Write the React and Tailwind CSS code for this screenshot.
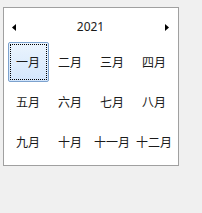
import React from 'react';

const months = ['一月', '二月', '三月', '四月', '五月', '六月', '七月', '八月', '九月', '十月', '十一月', '十二月'];

const App = () => {
  return (
    <div className="w-[202px] h-[213px] bg-[#f0f0f0] pt-[7px] pl-[3px]" style={{ fontFamily: '"Noto Sans", "Noto Sans CJK SC", sans-serif' }}>
      <div className="w-[176px] h-[159px] bg-white border border-[#a0a0a0] px-[3px]">
        <div className="h-[20px] mt-[9px] flex items-center justify-between pl-[5px] pr-[6px]">
          <svg width="4" height="7" viewBox="0 0 4 7"><path d="M4 0 L0 3.5 L4 7 Z" fill="#000" /></svg>
          <span className="text-[12px] text-[#1a1a1a] leading-none">2021</span>
          <svg width="4" height="7" viewBox="0 0 4 7"><path d="M0 0 L4 3.5 L0 7 Z" fill="#000" /></svg>
        </div>
        <div className="grid grid-cols-4 mt-[5px]">
          {months.map((m, i) => (
            <div key={m} className="h-[40px] flex items-center justify-center">
              {i === 0 ? (
                <div className="w-[41px] h-[40px] border border-[#7da2ce] rounded-[2px] bg-gradient-to-b from-[#ebf4fd] to-[#d3e6fc] p-px">
                  <div className="w-full h-full border border-dotted border-black flex items-center justify-center text-[12px] text-[#1a1a1a] font-['Noto_Sans_CJK_SC']">
                    {m}
                  </div>
                </div>
              ) : (
                <span className="text-[12px] text-[#1a1a1a] font-['Noto_Sans_CJK_SC']">{m}</span>
              )}
            </div>
          ))}
        </div>
      </div>
    </div>
  );
};

export default App;
